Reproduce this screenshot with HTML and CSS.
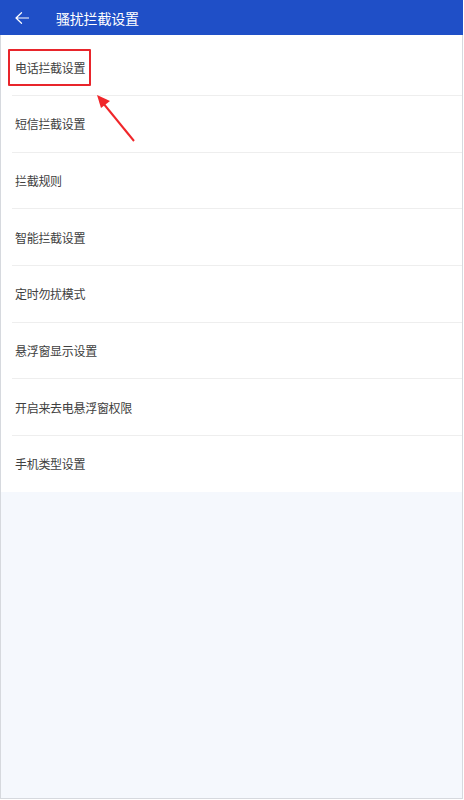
FILE: index.html
```html
<!DOCTYPE html>
<html lang="zh-CN">
<head>
<meta charset="utf-8">
<title>骚扰拦截设置</title>
<link rel="stylesheet" href="styles.css">
</head>
<body>
<div class="frame">
  <header class="topbar">
    <svg class="back" width="14" height="12" viewBox="0 0 14 12">
      <path d="M13.5 6H1M6.5 0.7L1 6l5.5 5.3" fill="none" stroke="#fff" stroke-width="1.2" stroke-linecap="round" stroke-linejoin="round"/>
    </svg>
    <span class="title">骚扰拦截设置</span>
  </header>
  <ul class="list">
    <li class="row">电话拦截设置</li>
    <li class="row">短信拦截设置</li>
    <li class="row">拦截规则</li>
    <li class="row">智能拦截设置</li>
    <li class="row">定时勿扰模式</li>
    <li class="row">悬浮窗显示设置</li>
    <li class="row">开启来去电悬浮窗权限</li>
    <li class="row last">手机类型设置</li>
  </ul>
  <div class="rest"></div>
  <div class="highlight"></div>
  <svg class="pointer" width="60" height="60" viewBox="0 0 60 60">
    <line x1="47" y1="55" x2="16" y2="17" stroke="#f0262a" stroke-width="2"/>
    <polygon points="10,9 23,15 14,22" fill="#f0262a"/>
  </svg>
</div>
</body>
</html>
```
FILE: styles.css
```css
html, body {
  margin: 0;
  padding: 0;
  background: #ffffff;
}
body {
  font-family: "Noto Sans CJK SC", "Noto Sans", sans-serif;
}
.frame {
  position: relative;
  box-sizing: border-box;
  width: 463px;
  height: 799px;
  border-left: 1px solid #d6d9de;
  border-right: 1px solid #d6d9de;
  border-bottom: 1px solid #d6d9de;
  display: flex;
  flex-direction: column;
  background: #f5f8fd;
}
.topbar {
  height: 35px;
  flex: none;
  background: #1f4fc7;
  display: flex;
  align-items: center;
  margin-left: -1px;
  margin-right: -1px;
  padding-left: 15px;
  color: #fff;
}
.back {
  display: block;
  flex: none;
}
.title {
  margin-left: 27px;
  font-size: 14px;
  line-height: 1;
  letter-spacing: -0.2px;
}
.list {
  list-style: none;
  margin: 0;
  padding: 4.3px 0 0;
  background: #fff;
  flex: none;
}
.row {
  box-sizing: border-box;
  height: 56.67px;
  margin-left: 11px;
  padding-left: 3px;
  border-bottom: 1px solid #eeeeee;
  display: flex;
  align-items: center;
  font-size: 12px;
  color: #404040;
  letter-spacing: -0.3px;
}
.row.last {
  border-bottom: none;
  height: 55.67px;
}
.rest {
  flex: 1;
  background: #f5f8fd;
}
.highlight {
  position: absolute;
  left: 7px;
  top: 49px;
  width: 83px;
  height: 37px;
  box-sizing: border-box;
  border: 2px solid #e8252b;
  border-radius: 1px;
}
.pointer {
  position: absolute;
  left: 86px;
  top: 86px;
}
```
